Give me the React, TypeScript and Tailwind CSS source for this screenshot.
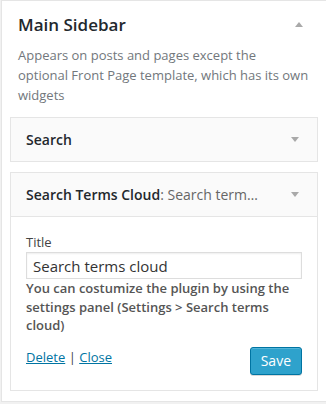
import React from "react";

const font = { fontFamily: '"Open Sans", "Liberation Sans", sans-serif' };

function Caret({ up }: { up?: boolean }) {
  return (
    <svg width="8" height="5" viewBox="0 0 8 5" className="shrink-0">
      {up ? (
        <polygon points="0,5 8,5 4,0" fill="#a9a9a9" />
      ) : (
        <polygon points="0,0 8,0 4,5" fill="#a9a9a9" />
      )}
    </svg>
  );
}

function WidgetTop({ title, subtitle }: { title: string; subtitle?: string }) {
  return (
    <div className="flex h-[43px] items-center justify-between bg-[#fafafa] pl-[15px] pr-[18px]">
      <h4 className="text-[14px] font-semibold text-[#23282d]">
        {title}
        {subtitle && (
          <span className="font-normal text-[#666]">: {subtitle}</span>
        )}
      </h4>
      <Caret />
    </div>
  );
}

export default function App() {
  return (
    <div
      className="h-[404px] w-[326px] overflow-hidden bg-[#f1f1f1] pl-px"
      style={font}
    >
      <div className="w-[326px] border border-[#e5e5e5] bg-white pb-[10px]">
        <div className="px-4 pt-[9px] pb-[12px]">
          <div className="flex items-start justify-between">
            <h3 className="text-[17px] font-semibold leading-[30px] text-[#23282d]">
              Main Sidebar
            </h3>
            <div className="mr-[7px] mt-[12px]">
              <Caret up />
            </div>
          </div>
          <p className="mt-[5px] text-[13px] leading-[20px] text-[#72777c]">
            Appears on posts and pages except the
            <br />
            optional Front Page template, which has its own widgets
          </p>
        </div>

        <div className="flex flex-col gap-[10px] px-2">
          <div className="border border-[#e5e5e5]">
            <WidgetTop title="Search" />
          </div>

          <div className="border border-[#e5e5e5]">
            <WidgetTop title="Search Terms Cloud" subtitle="Search term…" />
            <div className="border-t border-[#e5e5e5] bg-white px-[15px] pt-[15px] pb-[15px]">
              <label className="block text-[13px] leading-[20px] text-[#444]">
                Title
              </label>
              <input
                className="block h-[27px] w-full border border-[#ddd] px-[6px] text-[15px] text-[#333] shadow-[inset_0_1px_2px_rgba(0,0,0,0.07)] outline-none"
                defaultValue="Search terms cloud"
              />
              <p className="text-[13px] font-semibold leading-[18.5px] text-[#555]">
                You can costumize the plugin by using the settings panel
                (Settings &gt; Search terms cloud)
              </p>
              <div className="mt-[12px] flex items-start justify-between">
                <div className="text-[13px] leading-[20px] text-[#444]">
                  <a href="#" className="text-[#0074a2] underline">
                    Delete
                  </a>{" "}
                  |{" "}
                  <a href="#" className="text-[#0074a2] underline">
                    Close
                  </a>
                </div>
                <button className="h-[28px] rounded-[3px] border border-[#0074a2] bg-[#2ea2cc] px-[10px] text-[14px] text-white shadow-[inset_0_1px_0_rgba(120,200,230,0.5),0_1px_0_rgba(0,0,0,0.15)]">
                  Save
                </button>
              </div>
            </div>
          </div>
        </div>
      </div>
    </div>
  );
}
